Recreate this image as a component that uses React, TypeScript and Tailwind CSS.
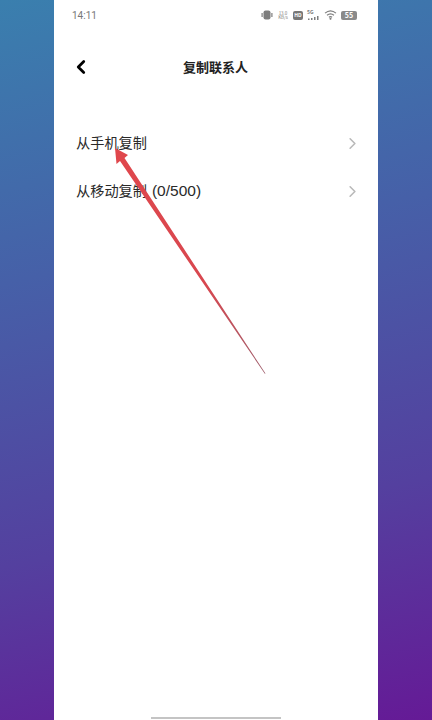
import { ChevronRight, ChevronLeft } from "lucide-react";

const font = { fontFamily: '"Noto Sans CJK SC", "Liberation Sans", sans-serif' };

function Row({ label, count }: { label: string; count?: string }) {
  return (
    <div className="flex h-12 items-center justify-between pl-[22px] pr-[16px]">
      <span className="mt-[-1px] text-[14.2px] text-[#2a2a2a]">
        {label}
        {count && <span className="ml-[5px] text-[15.5px]" style={{ fontFamily: '"Liberation Sans", sans-serif' }}>{count}</span>}
      </span>
      <ChevronRight className="size-[19px] text-[#b9b9b9]" strokeWidth={2} />
    </div>
  );
}

function StatusIcons() {
  return (
    <div className="flex items-center gap-[4px] text-[#7d7d7d]">
      <svg width="12" height="10" viewBox="0 0 12 10" fill="currentColor">
        <rect x="2.5" y="0.5" width="7" height="9" rx="2" />
        <rect x="0.5" y="3" width="1.2" height="4" />
        <rect x="10.3" y="3" width="1.2" height="4" />
      </svg>
      <div className="flex w-[12px] flex-col items-center text-[4.5px] leading-[4.5px]">
        <span>13.0</span>
        <span>KB/s</span>
      </div>
      <div className="flex h-[9px] w-[10px] items-center justify-center rounded-[2px] bg-[#777] text-[5px] font-bold text-white">
        HD
      </div>
      <div className="relative h-[10px] w-[13px]">
        <span className="absolute left-0 top-[-1px] text-[5px] font-bold leading-[6px]">5G</span>
        <svg className="absolute bottom-0 left-0" width="13" height="4" viewBox="0 0 13 4" fill="currentColor">
          <rect x="1" y="2.5" width="1.5" height="1.5" />
          <rect x="4" y="2" width="1.5" height="2" />
          <rect x="7" y="1" width="1.5" height="3" />
          <rect x="10" y="0" width="1.5" height="4" />
        </svg>
      </div>
      <svg width="13" height="10" viewBox="0 0 13 10" fill="none" stroke="currentColor" strokeWidth="1.1">
        <path d="M1 3.2C4.4 .3 8.6 .3 12 3.2" />
        <path d="M3 5.3C5.2 3.5 7.8 3.5 10 5.3" />
        <path d="M4.9 7.2C5.9 6.4 7.1 6.4 8.1 7.2" />
        <circle cx="6.5" cy="8.8" r=".5" fill="currentColor" />
      </svg>
      <div className="flex h-[9px] w-[16px] items-center justify-center rounded-[2px] bg-[#8a8a8a] text-[7px] font-bold text-white">
        55
      </div>
    </div>
  );
}

export default function App() {
  return (
    <div
      className="relative flex h-[720px] w-[432px] justify-center overflow-hidden bg-[linear-gradient(168deg,#3a7fae_0%,#4660a8_35%,#54409f_70%,#651a96_100%)]"
      style={font}
    >
      <div className="flex w-[324px] flex-col bg-white">
        <div className="flex h-[30px] items-center justify-between pl-[18px] pr-[21px]">
          <span className="text-[10px] text-[#777]" style={{ fontFamily: '"Roboto", sans-serif' }}>
            14:11
          </span>
          <StatusIcons />
        </div>
        <div className="mt-[15px] flex h-[44px] items-center pl-[16px]">
          <ChevronLeft className="size-[22px] text-black" strokeWidth={3} />
          <span className="ml-[91px] text-[13px] font-bold text-[#222]">复制联系人</span>
        </div>
        <div className="mt-[30px]">
          <Row label="从手机复制" />
          <Row label="从移动复制" count="(0/500)" />
        </div>
        <div className="mt-auto flex justify-center pb-[1px]">
          <div className="h-[2px] w-[130px] bg-[#c4c4c4]" />
        </div>
      </div>
      {/* red annotation arrow */}
      <svg className="pointer-events-none absolute left-0 top-0" width="432" height="720" viewBox="0 0 432 720">
        <defs>
          <linearGradient id="arrowFade" x1="115" y1="148" x2="265" y2="373" gradientUnits="userSpaceOnUse">
            <stop offset="0" stopColor="#e0474c" />
            <stop offset="0.6" stopColor="#d8474f" />
            <stop offset="1" stopColor="#a0606e" />
          </linearGradient>
        </defs>
        <path
          d="M115 148 L128 155 L124.5 158 L265.5 373.5 L264.8 373.8 L120 161 L116.5 164 Z"
          fill="url(#arrowFade)"
        />
      </svg>
    </div>
  );
}
